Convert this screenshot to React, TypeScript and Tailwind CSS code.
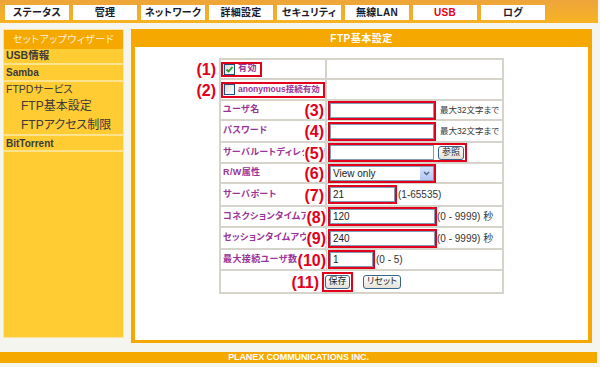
import React from "react";

const RED = "border-[#e2001a]";

function Num({ n, right }: { n: string; right: number }) {
  return (
    <span
      className="absolute top-1/2 -translate-y-1/2 h-[17px] leading-[17px] bg-white text-[16px] font-bold text-[#e2001a] font-['Liberation_Sans',sans-serif] z-10"
      style={{ right }}
    >
      {n}
    </span>
  );
}

function Input({ w, value = "" }: { w: number; value?: string }) {
  return (
    <input
      readOnly
      value={value}
      className="h-[15px] border border-[#7f9db9] bg-white px-[2px] text-[10px] text-[#222] outline-none font-['Liberation_Sans',sans-serif]"
      style={{ width: w }}
    />
  );
}

function Btn({ label, w }: { label: string; w: number }) {
  return (
    <span
      className="inline-flex h-[14px] items-center justify-center rounded-[3px] border border-[#36648b] bg-gradient-to-b from-white to-[#e4e2d8] text-[9px] text-[#222] leading-none"
      style={{ width: w }}
    >
      {label}
    </span>
  );
}

function Check({ checked }: { checked?: boolean }) {
  return (
    <span className="inline-flex h-[11px] w-[11px] shrink-0 items-center justify-center border border-[#1c5180] bg-gradient-to-br from-[#dcdcd7] to-white mr-[3px]">
      {checked && (
        <svg width="9" height="9" viewBox="0 0 9 9">
          <path d="M1.5 4.5 L3.5 6.5 L7.5 2" stroke="#21a121" strokeWidth="1.8" fill="none" />
        </svg>
      )}
    </span>
  );
}

function Row({
  h,
  label,
  children,
  num,
  numRight,
  boxed,
}: {
  h: number;
  label: React.ReactNode;
  children?: React.ReactNode;
  num: string;
  numRight: number;
  boxed?: boolean;
}) {
  return (
    <div className="relative flex border-b-2 border-[#d6d3cb]" style={{ height: h }}>
      <div
        className={`w-[106px] shrink-0 border-r-2 border-[#d6d3cb] flex items-center whitespace-nowrap text-[9px] font-bold text-[#993399] ${
          boxed ? "pl-0 overflow-visible" : "pl-[2px] overflow-hidden tracking-[0.4px]"
        }`}
      >
        {label}
      </div>
      <div className="flex-1 flex items-center pl-[1px] whitespace-nowrap text-[9px] text-[#333]">
        {children}
      </div>
      <Num n={num} right={numRight} />
    </div>
  );
}

export default function App() {
  const tabs = ["ステータス", "管理", "ネットワーク", "詳細設定", "セキュリティ", "無線LAN", "USB", "ログ"];
  return (
    <div className="w-[600px] h-[367px] overflow-hidden bg-[#f5f5ef] [font-feature-settings:'palt'] font-['Liberation_Sans','Noto_Sans_CJK_JP',sans-serif]">
      {/* top nav */}
      <div className="w-[598px] h-[23px] bg-gradient-to-b from-[#eda53a] to-[#f7b31f] flex items-start pt-[5px] pl-[5px] gap-[4px]">
        {tabs.map((t) => (
          <div
            key={t}
            className={`w-[64px] h-[15px] bg-white flex items-center justify-center text-[10px] font-bold leading-none tracking-[0.3px] ${
              t === "USB" ? "text-[#e2001a]" : "text-[#1a1a2a]"
            }`}
          >
            {t}
          </div>
        ))}
      </div>

      <div className="flex mt-[6px] ml-[3px] gap-[7px]">
        {/* sidebar */}
        <div className="w-[121px] h-[309px] bg-[#ffcc33] border border-[#fde3a0] flex flex-col text-[#3a3a3a]">
          <div className="h-[19px] bg-[#f5a800] flex items-center justify-center text-[10px] text-[#fdf0d8] tracking-[0.5px]">
            セットアップウィザード
          </div>
          <div className="h-[16px] border-b-2 border-[#ffe48f] flex items-center pl-[2px] text-[10.5px] font-bold">
            USB情報
          </div>
          <div className="h-[17px] border-b-2 border-[#ffe48f] flex items-center pl-[2px] text-[10px] font-bold">
            Samba
          </div>
          <div className="h-[54px] border-b-2 border-[#ffe48f] flex flex-col pl-[2px]">
            <div className="h-[15px] flex items-center text-[10.5px]">FTPDサービス</div>
            <div className="h-[18px] flex items-center pl-[15px] text-[12px]">FTP基本設定</div>
            <div className="h-[19px] flex items-center pl-[15px] text-[12px]">FTPアクセス制限</div>
          </div>
          <div className="h-[16px] border-b-2 border-[#ffe48f] flex items-center pl-[2px] text-[10px] font-bold">
            BitTorrent
          </div>
        </div>

        {/* main panel */}
        <div className="w-[461px] h-[314px] bg-[#f5a800] px-[4px] pb-[3px] flex flex-col">
          <div className="h-[18px] flex items-center justify-center text-[10px] font-bold text-white tracking-[0.5px]">
            FTP基本設定
          </div>
          <div className="flex-1 bg-white pt-[11px]">
            <div className="mx-auto w-[285px] border-2 border-[#d6d3cb]">
              <Row h={20} boxed num="(1)" numRight={286} label={
                <span className={`inline-flex items-center h-[15px] border-2 ${RED} pl-[1px] pr-[3px] tracking-[0.4px]`}>
                  <Check checked />有効
                </span>
              } />
              <Row h={21} boxed num="(2)" numRight={286} label={
                <span className={`inline-flex items-center h-[16px] w-[105px] border-2 ${RED} pl-[1px] text-[8.5px]`}>
                  <Check />anonymous接続有効
                </span>
              } />
              <Row h={20} num="(3)" numRight={178} label="ユーザ名">
                <span className={`inline-flex border-2 ${RED} p-0`}><Input w={104} /></span>
                <span className="ml-[4px] text-[8.5px]">最大32文字まで</span>
              </Row>
              <Row h={22} num="(4)" numRight={178} label="パスワード">
                <span className={`inline-flex border-2 ${RED}`}><Input w={104} /></span>
                <span className="ml-[4px] text-[8.5px]">最大32文字まで</span>
              </Row>
              <Row h={21} num="(5)" numRight={178} label="サーバルートディレクトリ">
                <span className={`inline-flex items-center border-2 ${RED} pr-[1px]`}>
                  <Input w={104} />
                  <span className="ml-[4px]"><Btn label="参照" w={26} /></span>
                </span>
              </Row>
              <Row h={20} num="(6)" numRight={178} label="R/W属性">
                <span className={`inline-flex border-2 ${RED}`}>
                  <span className="w-[104px] h-[15px] border border-[#7f9db9] bg-white flex items-center justify-between pl-[2px] text-[10px] text-[#222] font-['Liberation_Sans',sans-serif] tracking-normal">
                    View only
                    <span className="w-[13px] h-[13px] bg-gradient-to-b from-[#d6e2fd] to-[#b3c6f6] flex items-center justify-center">
                      <svg width="7" height="5" viewBox="0 0 7 5">
                        <path d="M1 1 L3.5 3.5 L6 1" stroke="#4d6185" strokeWidth="1.4" fill="none" />
                      </svg>
                    </span>
                  </span>
                </span>
              </Row>
              <Row h={23} num="(7)" numRight={178} label="サーバポート">
                <span className={`inline-flex border-2 ${RED}`}><Input w={65} value="21" /></span>
                <span className="text-[10px] ml-[1px] font-['Liberation_Sans',sans-serif]">(1-65535)</span>
              </Row>
              <Row h={21} num="(8)" numRight={176} label="コネクションタイムアウト">
                <span className={`inline-flex border-2 ${RED}`}><Input w={105} value="120" /></span>
                <span className="text-[10px] font-['Liberation_Sans','Noto_Sans_CJK_JP',sans-serif]">(0 - 9999) 秒</span>
              </Row>
              <Row h={22} num="(9)" numRight={176} label="セッションタイムアウト">
                <span className={`inline-flex border-2 ${RED}`}><Input w={105} value="240" /></span>
                <span className="text-[10px] font-['Liberation_Sans','Noto_Sans_CJK_JP',sans-serif]">(0 - 9999) 秒</span>
              </Row>
              <Row h={21} num="(10)" numRight={176} label="最大接続ユーザ数">
                <span className={`inline-flex border-2 ${RED}`}><Input w={43} value="1" /></span>
                <span className="text-[10px] ml-[1px] font-['Liberation_Sans',sans-serif]">(0 - 5)</span>
              </Row>
              <div className="relative h-[21px] flex items-center justify-center gap-[10px]">
                <span className={`inline-flex items-center h-[20px] border-2 ${RED} px-[1px]`}>
                  <Btn label="保存" w={25} />
                </span>
                <Btn label="リセット" w={38} />
                <Num n="(11)" right={183} />
              </div>
            </div>
          </div>
        </div>
      </div>

      <div className="mt-[9px] w-[597px] h-[11px] bg-[#f5a800] flex items-center justify-center text-[9px] font-bold text-white tracking-[-0.1px] leading-none">
        PLANEX COMMUNICATIONS INC.
      </div>
    </div>
  );
}
